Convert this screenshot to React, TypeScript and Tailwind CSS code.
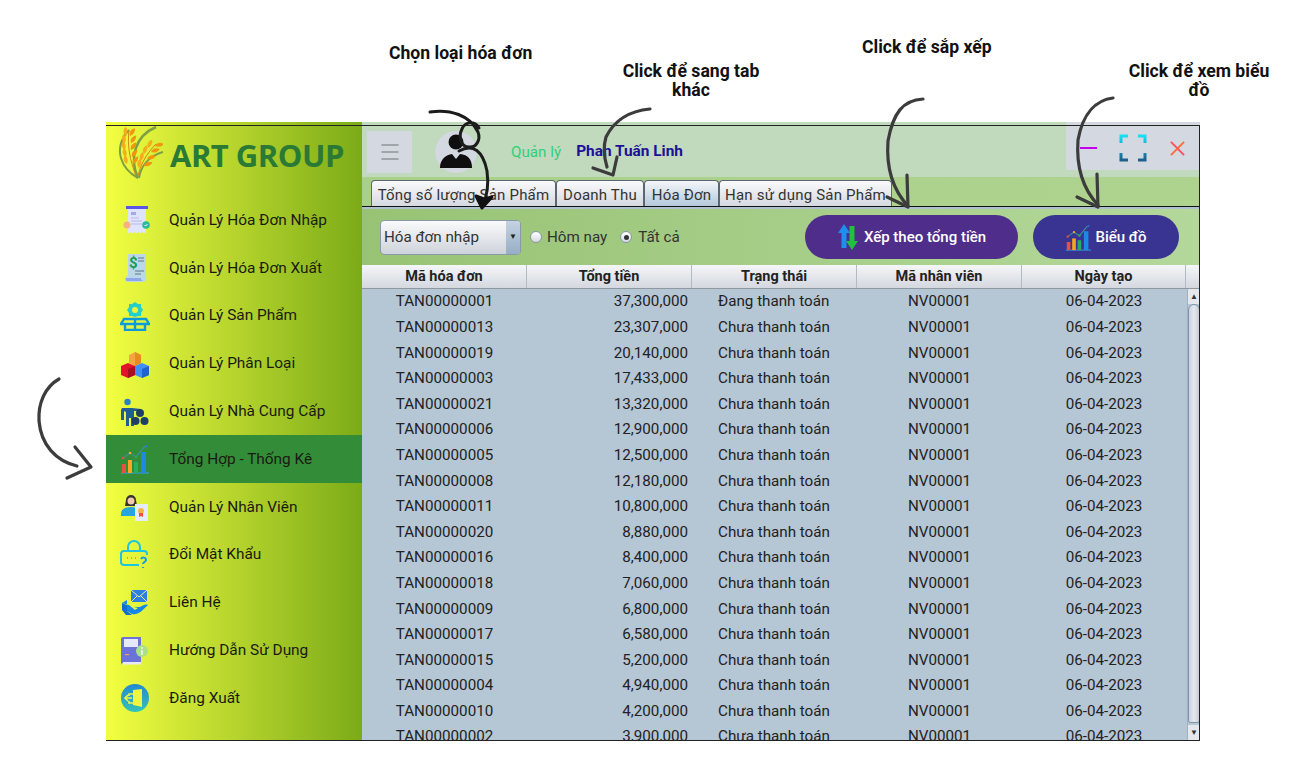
import { Menu } from 'lucide-react';
import type { ReactNode } from 'react';

const rows = [
  ['TAN00000001', '37,300,000', 'Đang thanh toán'],
  ['TAN00000013', '23,307,000', 'Chưa thanh toán'],
  ['TAN00000019', '20,140,000', 'Chưa thanh toán'],
  ['TAN00000003', '17,433,000', 'Chưa thanh toán'],
  ['TAN00000021', '13,320,000', 'Chưa thanh toán'],
  ['TAN00000006', '12,900,000', 'Chưa thanh toán'],
  ['TAN00000005', '12,500,000', 'Chưa thanh toán'],
  ['TAN00000008', '12,180,000', 'Chưa thanh toán'],
  ['TAN00000011', '10,800,000', 'Chưa thanh toán'],
  ['TAN00000020', '8,880,000', 'Chưa thanh toán'],
  ['TAN00000016', '8,400,000', 'Chưa thanh toán'],
  ['TAN00000018', '7,060,000', 'Chưa thanh toán'],
  ['TAN00000009', '6,800,000', 'Chưa thanh toán'],
  ['TAN00000017', '6,580,000', 'Chưa thanh toán'],
  ['TAN00000015', '5,200,000', 'Chưa thanh toán'],
  ['TAN00000004', '4,940,000', 'Chưa thanh toán'],
  ['TAN00000010', '4,200,000', 'Chưa thanh toán'],
  ['TAN00000002', '3,900,000', 'Chưa thanh toán'],
];

function Svg({ children }: { children: ReactNode }) {
  return (
    <svg viewBox="0 0 30 30" className="w-[30px] h-[30px]">
      {children}
    </svg>
  );
}

function ChartGlyph() {
  return (
    <>
      <path d="M1 29h28" stroke="#3aa0e8" strokeWidth="1" />
      <rect x="2" y="20" width="4" height="9" fill="#e8503f" />
      <rect x="8" y="16" width="4" height="13" fill="#f5a623" />
      <rect x="14" y="18" width="4" height="11" fill="#27ae60" />
      <rect x="21" y="8" width="5" height="21" fill="#1e88e5" />
      <path d="M3 14l7-5 6 4 9-11" fill="none" stroke="#3c8f9c" strokeWidth="1.2" />
      <circle cx="3" cy="14" r="1.3" fill="#e8503f" />
      <circle cx="10" cy="9" r="1.3" fill="#f5a623" />
      <circle cx="16" cy="13" r="1.3" fill="#27ae60" />
      <path d="M25 2l2-1-.4 2.5z" fill="#1e88e5" />
    </>
  );
}

const icons: ReactNode[] = [
  <Svg>
    <rect x="6" y="1" width="22" height="3" fill="#5a55e8" />
    <path d="M8 4h18v23l-2 1.500-2-1.500-2 1.500-2-1.500-2 1.500-2-1.500-2 1.500-2-1.500-2 1.500z" fill="#dfe3fb" />
    <rect x="11" y="7" width="5" height="3" fill="#a5a8e8" />
    <path d="M11 13h8M11 16h11M11 19h11" stroke="#b8bbef" strokeWidth="1.200" />
    <circle cx="7" cy="20" r="3.500" fill="#f5b183" />
    <circle cx="26" cy="20" r="3.800" fill="#2bb9a0" />
    <path d="M24.500 20l1 1 2-2" stroke="#fff" fill="none" />
  </Svg>,
  <Svg>
    <path d="M8 1h18v22a4 4 0 0 1-4 6H8a3 3 0 0 1-3-3c0-2 2-3 3-3z" fill="#bcd8e8" />
    <path d="M6 25h15a3 3 0 0 0 3 3H8a2 2 0 0 1-2-3z" fill="#8ea7ea" />
    <text x="9" y="15" fontSize="15" fontWeight="700" fill="#169c57" fontFamily="Roboto, sans-serif">$</text>
    <path d="M18 5h6M18 8h6M15 18h9M15 21h6" stroke="#7f97a8" strokeWidth="1.300" />
  </Svg>,
  <Svg>
    <path d="M12 3l3-2 3 2 3 0 0 3 2 3-2 3 0 3-3 0-3 1-3-1-3 0 0-3-2-3 2-3 0-3z" fill="#26d0c8" />
    <circle cx="15" cy="9" r="3" fill="#eef23f" />
    <path d="M4 18h22l3 5H1zM5 23v6h20v-6M15 18v11" fill="none" stroke="#0c9bd9" strokeWidth="2.400" />
  </Svg>,
  <Svg>
    <path d="M9 6l6-3 6 3v8l-6 3-6-3z" fill="#f5a540" />
    <path d="M15 3l6 3v8l-6 3z" fill="#e68a22" />
    <path d="M1 17l7-3 7 3v9l-7 3-7-3z" fill="#e3132c" />
    <path d="M8 20l7-3v9l-7 3z" fill="#a90d22" />
    <path d="M15 17l7-3 7 3v9l-7 3-7-3z" fill="#3f8ef5" />
    <path d="M22 20l7-3v9l-7 3z" fill="#1f64c8" />
  </Svg>,
  <Svg>
    <circle cx="7.500" cy="5" r="3.200" fill="#2a80c0" />
    <path d="M2 11h10l9 1v2l-7 0v15h-3v-8h-2v8H6v-14l-2-1v9H1V13z" fill="#1f5f8f" />
    <circle cx="20" cy="16" r="4" fill="#1d3f66" />
    <circle cx="15.500" cy="24" r="4" fill="#1d3f66" />
    <circle cx="24.500" cy="24" r="4" fill="#1d3f66" />
  </Svg>,
  <Svg>
    <ChartGlyph />
  </Svg>,
  <Svg>
    <path d="M6 8a5 5 0 0 1 10 0l1 6H5z" fill="#333" />
    <circle cx="11" cy="9" r="3.500" fill="#f3c9ad" />
    <path d="M1 22c0-5 4-7 10-7s8 2 9 5v4H1z" fill="#26a5dc" />
    <rect x="15" y="12" width="13" height="17" fill="#e4ecfb" />
    <circle cx="21" cy="19" r="3" fill="#f4b63f" />
    <path d="M19 21v4l2-1 2 1v-4" fill="#e8503f" />
  </Svg>,
  <Svg>
    <path d="M8 11V7a6 6 0 0 1 12 0v4" fill="none" stroke="#1dc5e0" strokeWidth="2" />
    <path d="M19 25H4a3 3 0 0 1-3-3v-8a3 3 0 0 1 3-3h20a3 3 0 0 1 3 3v1" fill="none" stroke="#1dc5e0" strokeWidth="2" />
    <path d="M7 18h1M11 18h1M15 18h1" stroke="#1dc5e0" strokeWidth="1.500" />
    <path d="M21 19c1-2 5-2 5 1 0 2-3 2-3 4M23 27v1" fill="none" stroke="#1a9ae0" strokeWidth="2" />
  </Svg>,
  <Svg>
    <rect x="11" y="2" width="16" height="12" fill="#2d7ee0" />
    <path d="M11 2l8 7 8-7M11 14l6-6M27 14l-6-6" fill="none" stroke="#e9f2a0" strokeWidth="1" />
    <path d="M2 15l5-3v11l5 3c5 1 8-1 16-9-2-1-5 0-8 2h-6l4 1-3 2-6-5z" fill="#1687e8" />
    <path d="M2 15l5 2v6l5 4-6 0-4-5z" fill="#0f6fcf" />
  </Svg>,
  <Svg>
    <path d="M1 3a2 2 0 0 1 2-2h18v26H3a2 2 0 0 0-2 2z" fill="#6b73d8" />
    <rect x="4" y="3" width="14" height="8" fill="#e6e9fb" />
    <rect x="5" y="18" width="4" height="1.200" fill="#f2a25c" />
    <rect x="3" y="26" width="18" height="2.500" fill="#e6e9fb" />
    <circle cx="22" cy="15" r="6" fill="#a9e089" />
    <rect x="21.200" y="14" width="1.600" height="5" fill="#f2f7e4" />
    <circle cx="22" cy="12" r="1" fill="#f2f7e4" />
  </Svg>,
  <Svg>
    <defs>
      <linearGradient id="logout" x1="0" y1="0" x2="0" y2="1">
        <stop offset="0" stopColor="#2289cf" />
        <stop offset="1" stopColor="#38c2b6" />
      </linearGradient>
    </defs>
    <circle cx="15" cy="15" r="14" fill="url(#logout)" />
    <path d="M13 7l9-1v18l-9-2z" fill="#eef63f" />
    <path d="M13 11H9v2M9 18v2h4M12 15H5M8 12l-3 3 3 3" fill="none" stroke="#eef63f" strokeWidth="1.600" />
  </Svg>,
];

const menu = [
  'Quản Lý Hóa Đơn Nhập',
  'Quản Lý Hóa Đơn Xuất',
  'Quản Lý Sản Phẩm',
  'Quản Lý Phân Loại',
  'Quản Lý Nhà Cung Cấp',
  'Tổng Hợp - Thống Kê',
  'Quản Lý Nhân Viên',
  'Đổi Mật Khẩu',
  'Liên Hệ',
  'Hướng Dẫn Sử Dụng',
  'Đăng Xuất',
];

const grain = 'M0 0c3-3 3.500-6 2-9-3.500 2-4.500 6-2 9z';

// wheat: [x, y, rotation] per grain
const grains = [
  [12, 40, -25], [18, 40, 22],
  [11, 33, -25], [17, 33, 22],
  [10, 26, -25], [16, 26, 22],
  [10, 19, -22], [16, 19, 22],
  [11, 12, -15], [15, 12, 20],
  [24, 44, -5], [29, 42, 55],
  [26, 37, 0], [32, 35, 60],
  [29, 30, 5], [36, 28, 60],
  [33, 24, 15], [40, 22, 65],
];

function Logo() {
  return (
    <svg viewBox="0 0 48 56" className="w-[48px] h-[56px] shrink-0">
      <path d="M23 54C8 46-4 26 14 6" fill="none" stroke="#7e9f45" strokeWidth="2" />
      <path d="M23 54C14 34 20 12 41 3" fill="none" stroke="#7e9f45" strokeWidth="2.500" />
      <path d="M24 54c2-12 10-22 24-26" fill="none" stroke="#7e9f45" strokeWidth="2" />
      <path d="M21 52C15 36 12 22 14 6M23 52c2-10 8-22 18-32" fill="none" stroke="#d08a12" strokeWidth="1" />
      {grains.map(([x, y, r], i) => (
        <path key={i} d={grain} transform={`translate(${x} ${y}) rotate(${r})`} fill={i % 2 ? '#f0960f' : '#f5ad1c'} />
      ))}
    </svg>
  );
}

function Sidebar() {
  return (
    <aside className="w-[256px] shrink-0 bg-gradient-to-r from-[#f3ff41] to-[#7bab18]">
      <div className="h-[74.500px] flex items-start pl-[9px] gap-[7px] pt-[2px]">
        <Logo />
        <span className="mt-[11px] font-['Open_Sans',sans-serif] font-bold text-[31px] leading-[40px] tracking-[-0.5px] text-[#2a7a35]">
          ART GROUP
        </span>
      </div>
      {menu.map((label, i) => (
        <div
          key={label}
          className={`h-[47.800px] flex items-center pl-[14px] gap-[19px] ${i === 5 ? 'bg-[#338d38]' : ''}`}
        >
          <div className="w-[30px] h-[30px] shrink-0">{icons[i]}</div>
          <span className="text-[15.400px] text-[#1a1a12]">{label}</span>
        </div>
      ))}
    </aside>
  );
}

function TopBar() {
  return (
    <div className="h-[55px] flex bg-[#c1d9bc]">
      <div className="flex items-center pl-[5px] flex-1 pt-[5px]">
        <button className="w-[45px] h-[42px] flex items-center justify-center bg-[#d4d8e0] text-[#8f949a]">
          <Menu className="w-[24px] h-[24px]" strokeWidth={1.500} />
        </button>
        <svg viewBox="0 0 42 42" className="ml-[23px] w-[42px] h-[42px]">
          <circle cx="21" cy="21" r="21" fill="#d4d8e0" />
          <circle cx="21" cy="11" r="7.500" fill="#0f0f0f" />
          <path d="M5 37c0-9 6-13 12-14l4 5 4-5c8 1 12 5 12 14z" fill="#0f0f0f" />
        </svg>
        <span className="ml-[34px] text-[15.200px] text-[#2fd07b]">Quản lý</span>
        <span className="ml-[15px] text-[15.400px] font-bold text-[#1c0f98]">Phan Tuấn Linh</span>
      </div>
      <div className="w-[134px] h-[48px] bg-[#d4d8e1] flex items-center pt-[4px]">
        <div className="ml-[14px] w-[17px] h-[2px] bg-[#c800f0]" />
        <svg viewBox="0 0 28 28" className="ml-[22px] w-[28px] h-[28px]" fill="none" strokeWidth="3">
          <defs>
            <linearGradient id="expand" x1="0" y1="0" x2="0" y2="1">
              <stop offset="0" stopColor="#14e0f0" />
              <stop offset="1" stopColor="#1c5f8c" />
            </linearGradient>
          </defs>
          <path d="M9 2H2v7M19 2h7v7M2 19v7h7M26 19v7h-7" stroke="url(#expand)" />
        </svg>
        <svg viewBox="0 0 16 16" className="ml-[23px] w-[15px] h-[15px]" fill="none" strokeWidth="2">
          <path d="M1 1l14 14" stroke="#ff4d5f" />
          <path d="M15 1L1 15" stroke="#ff6a3a" />
        </svg>
      </div>
    </div>
  );
}

const tabs = [
  { label: 'Tổng số lượng Sản Phẩm', width: 'w-[185px]' },
  { label: 'Doanh Thu', width: 'w-[88px]' },
  { label: 'Hóa Đơn', width: 'w-[75px]', active: true },
  { label: 'Hạn sử dụng Sản Phẩm', width: 'w-[173px]' },
];

function Tabs() {
  return (
    <div className="h-[32px] bg-gradient-to-r from-[#a9d089] to-[#aed38f] pl-[9px] pt-[3px] border-b-[3px] border-[#aebfd0] relative">
      <div className="flex h-[26px]">
        {tabs.map(tab => (
          <div
            key={tab.label}
            className={`${tab.width} flex items-center justify-center pt-[3px] rounded-t-[4px] border border-b-0 border-[#5c6670] text-[15px] tracking-[0.2px] text-[#333] whitespace-nowrap bg-gradient-to-b ${
              tab.active ? 'from-[#f4f6f9] to-[#b4c8db]' : 'from-[#fafafb] to-[#d5d9e0]'
            }`}
          >
            {tab.label}
          </div>
        ))}
      </div>
      <div className="absolute left-0 right-0 bottom-[-1px] h-px bg-[#111]" />
    </div>
  );
}

function Toolbar() {
  return (
    <div className="h-[56px] bg-gradient-to-r from-[#98c374] to-[#b4d89b] flex items-center pl-[18px] pr-[21px] text-[15.200px] text-[#333]">
      <div className="w-[141px] h-[35px] flex rounded-[4px] border border-[#8b98a8] overflow-hidden bg-gradient-to-b from-[#fafafb] to-[#ced3db]">
        <span className="flex-1 pl-[3px] leading-[33px]">Hóa đơn nhập</span>
        <span className="w-[14px] flex items-center justify-center bg-gradient-to-b from-[#c4d3e2] to-[#96aec6] text-[8px] text-[#222]">
          ▼
        </span>
      </div>
      <span className="ml-[9px] w-[12px] h-[12px] rounded-full border border-[#8b98a8] bg-gradient-to-b from-[#fff] to-[#d5d9e0]" />
      <span className="ml-[5px]">Hôm nay</span>
      <span className="ml-[13px] w-[12px] h-[12px] rounded-full border border-[#8b98a8] bg-gradient-to-b from-[#fff] to-[#d5d9e0] flex items-center justify-center">
        <span className="w-[5px] h-[5px] rounded-full bg-[#333]" />
      </span>
      <span className="ml-[6px]">Tất cả</span>
      <button className="ml-auto w-[213px] h-[44px] rounded-full bg-[#4f2d8b] flex items-center justify-center gap-[5px] text-[15px] font-medium text-white">
        <svg viewBox="0 0 22 26" className="w-[22px] h-[26px]">
          <path d="M7 0l6 9H9.500v15h-5V9H1z" fill="#1d8fef" />
          <path d="M15 26l-6-9h3.500V2h5v15H21z" fill="#1fc13e" />
        </svg>
        Xếp theo tổng tiền
      </button>
      <button className="ml-[15px] w-[146px] h-[44px] rounded-full bg-[#393491] flex items-center justify-center gap-[3px] text-[15px] font-medium text-white">
        <svg viewBox="0 0 30 30" className="w-[27px] h-[27px]">
          <ChartGlyph />
        </svg>
        Biểu đồ
      </button>
    </div>
  );
}

const columns = 'grid grid-cols-[165px_165px_165px_165px_164px]';

function Scrollbar() {
  return (
    <div className="w-[13px] h-[452px] shrink-0 flex flex-col bg-[#b6c7d6] border-l border-[#a2b1c0]">
      <div className="h-[15px] flex items-center justify-center text-[8px] text-[#333] bg-[#e4e7ec]">▲</div>
      <div className="h-[419px] rounded-t-[10px] rounded-b-[4px] border border-[#7e94aa] bg-gradient-to-r from-[#c7d3df] via-[#e6e9ee] to-[#c7ccd4]" />
      <div className="mt-auto h-[16px] flex items-center justify-center text-[8px] text-[#333] bg-[#e4e7ec]">▼</div>
    </div>
  );
}

function InvoiceTable() {
  return (
    <div className="flex-1 min-h-0 overflow-hidden flex flex-col">
      <div className="h-[24px] flex bg-gradient-to-b from-[#f5f6f8] to-[#d4d8df] border-b border-[#8f97a0] text-[14.500px] font-bold text-[#222]">
        <div className={`${columns} flex-1`}>
          {['Mã hóa đơn', 'Tổng tiền', 'Trạng thái', 'Mã nhân viên', 'Ngày tạo'].map(h => (
            <div key={h} className="flex items-center justify-center border-r border-[#b4bac2]">
              {h}
            </div>
          ))}
        </div>
        <div className="w-[13px]" />
      </div>
      <div className="flex-1 min-h-0 flex bg-[#b5c6d5] overflow-hidden">
        <div className="flex-1 text-[15.200px] text-[#222]">
          {rows.map(([id, total, status]) => (
            <div key={id} className={`${columns} h-[25.600px] items-center`}>
              <div className="text-center">{id}</div>
              <div className="text-right pr-[4px]">{total}</div>
              <div className="pl-[26px]">{status}</div>
              <div className="text-center">NV00001</div>
              <div className="text-center">06-04-2023</div>
            </div>
          ))}
        </div>
        <Scrollbar />
      </div>
    </div>
  );
}

function Annotations() {
  const caption = "absolute font-['Roboto',sans-serif] font-bold text-[17.600px] leading-[19px] text-[#111] text-center";
  return (
    <>
      <div className={`${caption} left-[389px] top-[44px] whitespace-nowrap`}>Chọn loại hóa đơn</div>
      <div className={`${caption} left-[616px] top-[62px] w-[150px]`}>Click để sang tab khác</div>
      <div className={`${caption} left-[862px] top-[38px] whitespace-nowrap`}>Click để sắp xếp</div>
      <div className={`${caption} left-[1124px] top-[62px] w-[150px]`}>Click để xem biểu đồ</div>
      <svg className="absolute left-0 top-0 w-[1300px] h-[760px] pointer-events-none" viewBox="0 0 1300 760" fill="none" strokeLinecap="round" strokeLinejoin="round">
        <g stroke="#1c1c1c" strokeWidth="3">
          <path d="M430 112c20-3 40 3 48 20 3 8-2 16-9 15-8 0-11-10-7-18 3-8 13-8 17-1" />
          <path d="M459 151c14-8 24 0 28 20 2 14 0 26-5 36" />
          <path d="M476 196l6 12 10-11-8 2z" fill="#111" stroke="#111" />
        </g>
        <g stroke="#3c3c3c" strokeWidth="3.200">
          <path d="M650 109c-22 2-36 12-44 28-3 10-2 20 1 30" />
          <path d="M593 168l20 7 4-18" />
          <path d="M923 99c-20 1-30 14-35 42-2 28 6 50 20 65" />
          <path d="M887 197l21 10-1-32" />
          <path d="M1113 98c-16 2-30 14-35 42-2 28 6 50 20 65" />
          <path d="M1077 197l21 10-1-33" />
          <path d="M59 379c-14 8-21 24-20 42 2 24 17 40 38 45" />
          <path d="M75 447l16 20-24 11" />
        </g>
      </svg>
    </>
  );
}

export default function App() {
  return (
    <div className="relative w-[1300px] h-[760px] overflow-hidden bg-white pt-[122px] pl-[106px] font-['Roboto',sans-serif]">
      <div className="relative w-[1094px] h-[619px] flex overflow-hidden">
        <Sidebar />
        <main className="flex-1 min-w-0 flex flex-col">
          <TopBar />
          <Tabs />
          <Toolbar />
          <InvoiceTable />
        </main>
        <div className="absolute inset-0 top-[3px] border-t border-r border-b border-[#222] pointer-events-none" />
      </div>
      <Annotations />
    </div>
  );
}
